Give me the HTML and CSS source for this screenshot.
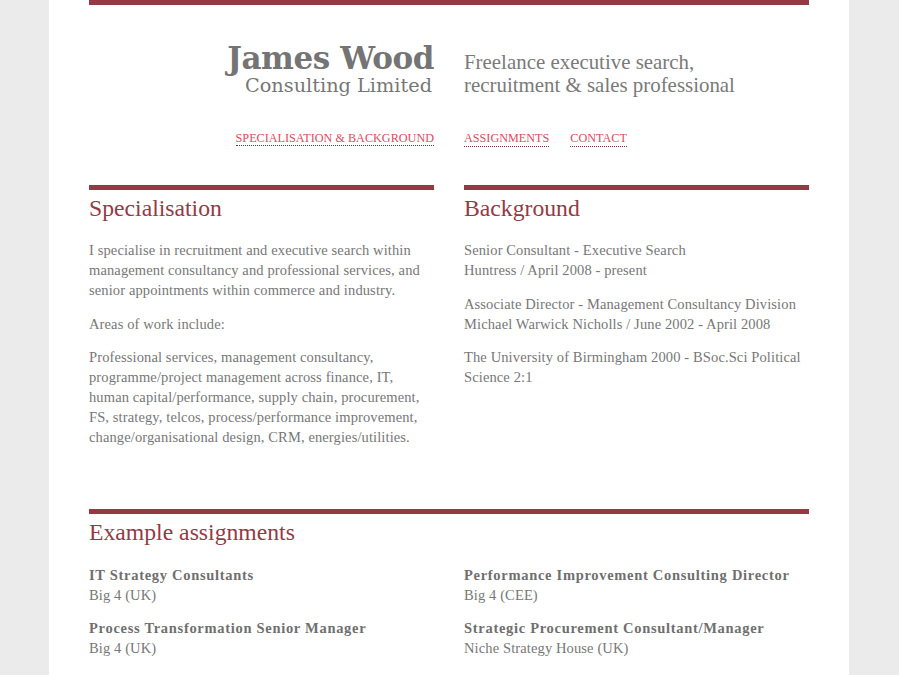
FILE: index.html
```html
<!DOCTYPE html>
<html lang="en">
<head>
<meta charset="utf-8">
<title>James Wood Consulting Limited</title>
<link rel="stylesheet" href="styles.css">
</head>
<body>
<div class="page">
  <header class="masthead">
    <div class="brand">
      <h1 class="brand-name">James Wood</h1>
      <div class="brand-sub">Consulting Limited</div>
    </div>
    <p class="tagline">Freelance executive search,<br>recruitment &amp; sales professional</p>
  </header>
  <nav class="nav">
    <div class="nav-left"><a href="#spec">SPECIALISATION &amp; BACKGROUND</a></div>
    <div class="nav-right"><a href="#assign">ASSIGNMENTS</a><a href="#contact">CONTACT</a></div>
  </nav>
  <div class="cols" id="spec">
    <section class="block">
      <h2 class="heading">Specialisation</h2>
      <p>I specialise in recruitment and executive search within management consultancy and professional services, and senior appointments within commerce and industry.</p>
      <p>Areas of work include:</p>
      <p>Professional services, management consultancy, programme/project management across finance, IT, human capital/performance, supply chain, procurement, FS, strategy, telcos, process/performance improvement, change/organisational design, CRM, energies/utilities.</p>
    </section>
    <section class="block">
      <h2 class="heading">Background</h2>
      <p>Senior Consultant - Executive Search<br>Huntress / April 2008 - present</p>
      <p>Associate Director - Management Consultancy Division<br>Michael Warwick Nicholls / June 2002 - April 2008</p>
      <p>The University of Birmingham 2000 - BSoc.Sci Political Science 2:1</p>
    </section>
  </div>
  <section class="block wide" id="assign">
    <h2 class="heading">Example assignments</h2>
    <div class="cols assignments">
      <div>
        <p><strong>IT Strategy Consultants</strong><br>Big 4 (UK)</p>
        <p><strong>Process Transformation Senior Manager</strong><br>Big 4 (UK)</p>
      </div>
      <div>
        <p><strong>Performance Improvement Consulting Director</strong><br>Big 4 (CEE)</p>
        <p><strong>Strategic Procurement Consultant/Manager</strong><br>Niche Strategy House (UK)</p>
      </div>
    </div>
  </section>
</div>
</body>
</html>
```
FILE: styles.css
```css
html, body {
  margin: 0;
  padding: 0;
}
body {
  background: #ebebeb;
  padding-right: 1px;
  font-family: "Liberation Serif", "DejaVu Serif", serif;
  color: #777;
  font-size: 14.5px;
  line-height: 20px;
}
.page {
  width: 720px;
  margin: 0 auto;
  padding: 0 40px 40px;
  background: #fff;
  min-height: 700px;
}
.masthead {
  border-top: 5px solid #943a45;
  display: grid;
  grid-template-columns: 345px 345px;
  column-gap: 30px;
  padding-top: 36px;
}
.brand {
  text-align: right;
}
.brand-name {
  margin: 0;
  font-family: "DejaVu Serif", "Liberation Serif", serif;
  font-size: 31px;
  line-height: 34px;
  font-weight: bold;
  color: #747474;
  letter-spacing: -0.4px;
}
.brand-sub {
  font-family: "DejaVu Serif", "Liberation Serif", serif;
  font-size: 19.3px;
  line-height: 22px;
  padding-right: 2px;
  color: #777;
}
.tagline {
  margin: 10px 0 0;
  font-size: 20.9px;
  line-height: 23px;
  color: #7a7a7a;
}
.nav {
  display: grid;
  grid-template-columns: 345px 345px;
  column-gap: 30px;
  margin-top: 33px;
  font-size: 12.2px;
  line-height: 16px;
}
.nav-left {
  text-align: right;
}
.nav-right {
  display: flex;
  gap: 21px;
}
.nav a {
  color: #e0495f;
  text-decoration: none;
  border-bottom: 1px dotted #8a2a3a;
}
.cols {
  display: grid;
  grid-template-columns: 345px 345px;
  column-gap: 30px;
  margin-top: 38px;
}
.block {
  border-top: 5px solid #943a45;
}
.heading {
  margin: 3px 0 0;
  font-size: 23.7px;
  line-height: 30px;
  font-weight: normal;
  color: #943a45;
}
.block p {
  margin: 13.5px 0 0;
  letter-spacing: 0.12px;
}
.block .heading + p {
  margin-top: 17px;
}
.wide {
  margin-top: 62px;
}
.assignments {
  margin-top: 18px;
}
.assignments p {
  margin: 0 0 13px;
}
.assignments strong {
  color: #6f6f6f;
  letter-spacing: 0.7px;
}
```
